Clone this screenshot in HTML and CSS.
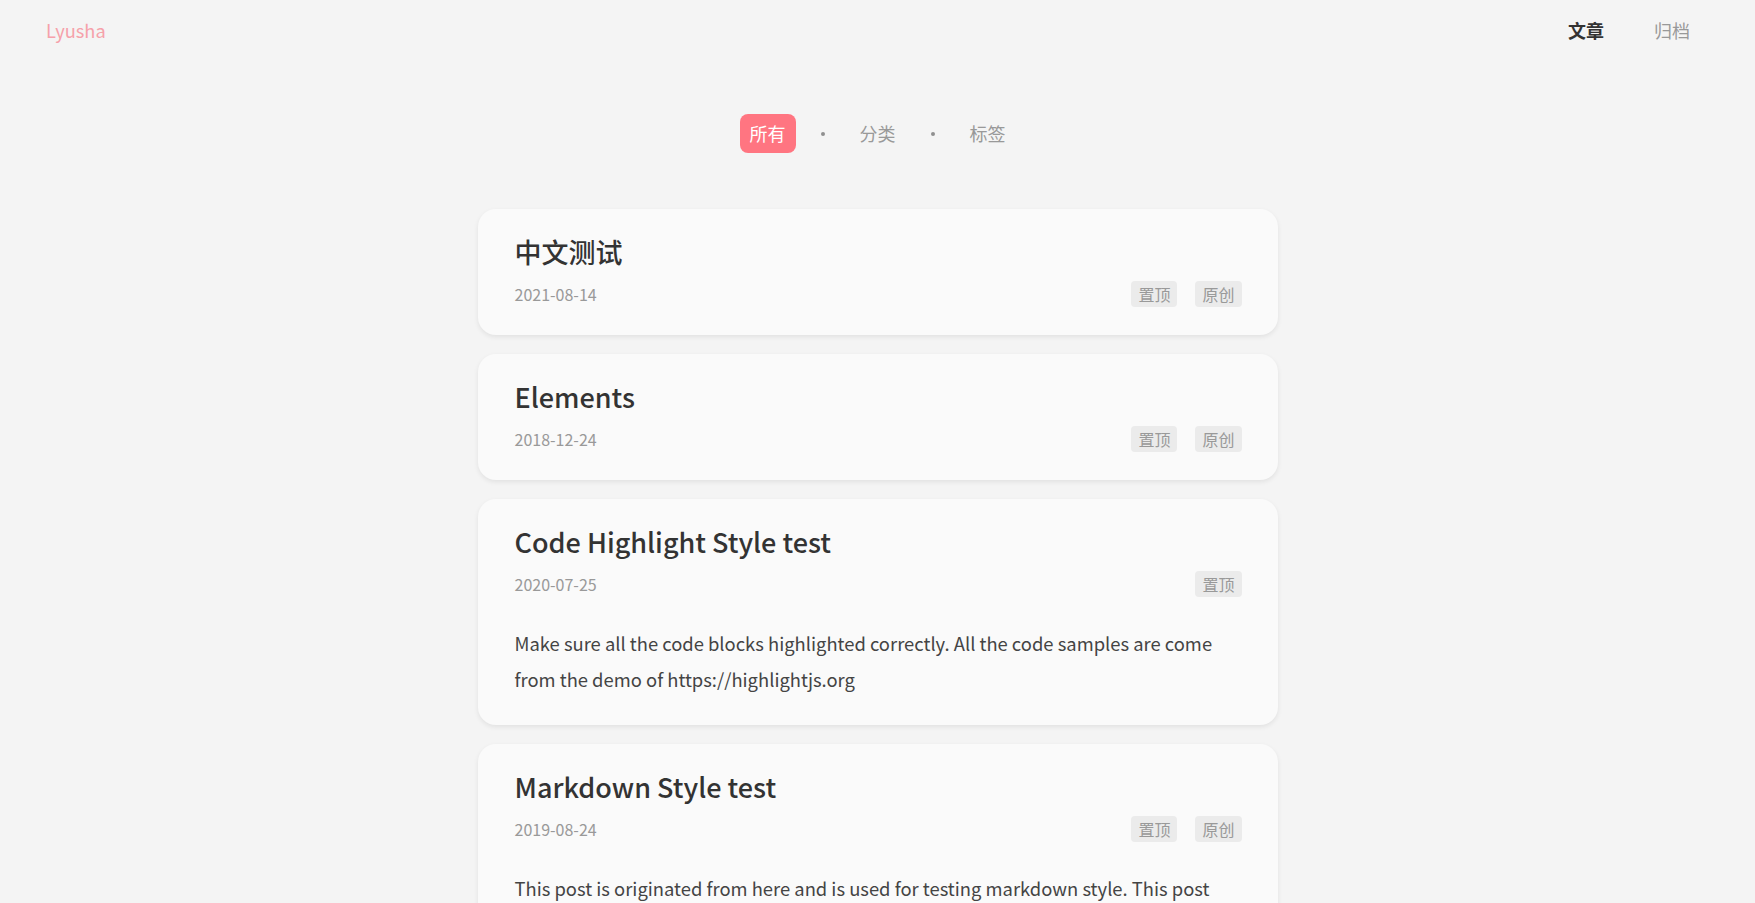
FILE: index.html
```html
<!DOCTYPE html>
<html lang="zh-CN">
<head>
<meta charset="utf-8">
<title>Lyusha</title>
<link rel="stylesheet" href="styles.css">
</head>
<body>
<header class="site-header">
  <a class="logo" href="#">Lyusha</a>
  <nav class="main-nav">
    <a class="nav-link active" href="#">文章</a>
    <a class="nav-link" href="#">归档</a>
  </nav>
</header>

<div class="tabs">
  <a class="tab active" href="#">所有</a>
  <span class="sep"><i class="dot"></i></span>
  <a class="tab" href="#">分类</a>
  <span class="sep"><i class="dot"></i></span>
  <a class="tab" href="#">标签</a>
</div>

<main class="posts">
  <article class="card">
    <h2 class="title">中文测试</h2>
    <div class="meta">
      <span class="date">2021-08-14</span>
      <span class="tags"><span class="tag">置顶</span><span class="tag">原创</span></span>
    </div>
  </article>

  <article class="card">
    <h2 class="title">Elements</h2>
    <div class="meta">
      <span class="date">2018-12-24</span>
      <span class="tags"><span class="tag">置顶</span><span class="tag">原创</span></span>
    </div>
  </article>

  <article class="card">
    <h2 class="title">Code Highlight Style test</h2>
    <div class="meta">
      <span class="date">2020-07-25</span>
      <span class="tags"><span class="tag">置顶</span></span>
    </div>
    <p class="excerpt">Make sure all the code blocks highlighted correctly. All the code samples are come from the demo of https://highlightjs.org</p>
  </article>

  <article class="card">
    <h2 class="title">Markdown Style test</h2>
    <div class="meta">
      <span class="date">2019-08-24</span>
      <span class="tags"><span class="tag">置顶</span><span class="tag">原创</span></span>
    </div>
    <p class="excerpt">This post is originated from here and is used for testing markdown style. This post contains multiple important markdown syntaxes like headers, paragraphs, blockquotes, tables, code blocks, etc.</p>
  </article>
</main>
</body>
</html>
```

FILE: styles.css
```css
* {
  box-sizing: border-box;
}

html {
  scrollbar-width: none;
}

body {
  margin: 0;
  background: #f4f4f4;
  font-family: "Noto Sans CJK SC", "Noto Sans", sans-serif;
  color: #333;
}

a {
  text-decoration: none;
}

.site-header {
  display: flex;
  justify-content: space-between;
  align-items: center;
  height: 60px;
  padding: 0 65px 0 46px;
}

.logo {
  font-size: 18.3px;
  line-height: 30px;
  color: #f6a1aa;
}

.main-nav {
  display: flex;
  gap: 50px;
}

.nav-link {
  font-size: 18px;
  line-height: 30px;
  color: #999;
}

.nav-link.active {
  color: #333;
  font-weight: 700;
}

.tabs {
  display: flex;
  justify-content: center;
  align-items: center;
  margin-top: 54px;
}

.tab {
  font-size: 18px;
  line-height: 27px;
  padding: 6px 10px;
  border-radius: 8px;
  color: #999;
}

.tab.active {
  background: #ff7581;
  color: #fff;
}

.sep {
  width: 54px;
  display: flex;
  justify-content: center;
}

.dot {
  width: 4px;
  height: 4px;
  border-radius: 50%;
  background: #8f8f8f;
}

.posts {
  width: 800px;
  margin: 56px auto 0;
  display: flex;
  flex-direction: column;
  gap: 19px;
}

.card {
  background: #fafafa;
  border-radius: 18px;
  padding: 22px 36px 28px 37px;
  box-shadow: 0 2px 5px rgba(0, 0, 0, 0.08);
}

.title {
  margin: 0;
  font-size: 27px;
  line-height: 42px;
  font-weight: 500;
  color: #333;
}

.meta {
  display: flex;
  justify-content: space-between;
  align-items: center;
  margin-top: 8px;
  height: 26px;
}

.date {
  font-size: 16px;
  color: #999;
}

.tags {
  display: flex;
  gap: 18px;
}

.tag {
  font-size: 16px;
  line-height: 26px;
  padding: 0 7px;
  border-radius: 4px;
  background: #ebebeb;
  color: #999;
}

.excerpt {
  margin: 28px 0 0;
  font-size: 18.4px;
  line-height: 36px;
  color: #444;
}
```
